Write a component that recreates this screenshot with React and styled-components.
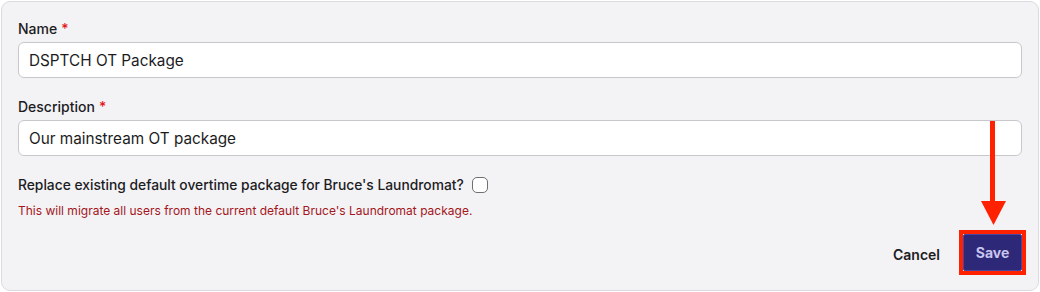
import React from "react";
import styled, { createGlobalStyle } from "styled-components";

const Global = createGlobalStyle`
  html, body { margin: 0; padding: 0; background: #ffffff; }
  body { font-family: Inter, "Liberation Sans", Arial, sans-serif; color: #1c1c1e; }
  * { box-sizing: border-box; }
`;

const Panel = styled.form`
  margin: 1px 1px 0 1px;
  width: 1038px;
  height: 290px;
  background: #f3f2f5;
  border: 1px solid #dcdadf;
  border-radius: 9px;
  padding: 18px 16px 0 16px;
  display: flex;
  flex-direction: column;
`;

const Field = styled.div`
  display: flex;
  flex-direction: column;
  gap: 4px;
  margin-bottom: ${(p) => p.$mb || 0}px;
`;

const Label = styled.label`
  font-size: 14px;
  font-weight: 500;
  line-height: 18px;
  color: #1c1c1e;
`;

const Req = styled.span`
  color: #e41818;
  margin-left: 4px;
`;

const Input = styled.input`
  height: 36px;
  width: 100%;
  border: 1px solid #c9c7cc;
  border-radius: 6px;
  background: #ffffff;
  padding: 0 10px;
  font-family: inherit;
  font-size: 15.3px;
  color: #1c1c1e;
  outline: none;
`;

const CheckRow = styled.div`
  display: flex;
  align-items: center;
  gap: 8px;
  font-size: 13.8px;
  font-weight: 500;
  line-height: 18px;
  height: 18px;
`;

const Check = styled.span`
  width: 16px;
  height: 16px;
  border: 1.5px solid #6e6e73;
  border-radius: 5px;
  background: #fff;
  display: inline-block;
`;

const Warn = styled.p`
  margin: 9px 0 0 0;
  font-size: 12px;
  line-height: 16px;
  color: #a3161b;
`;

const Actions = styled.div`
  display: flex;
  justify-content: flex-end;
  align-items: center;
  gap: 19px;
  margin-top: 11px;
`;

const CancelButton = styled.button`
  background: none;
  border: none;
  font-family: inherit;
  font-size: 14px;
  font-weight: 600;
  color: #1c1c1e;
  padding: 0;
  margin-top: 4px;
`;

const Highlight = styled.div`
  position: relative;
  border: 4px solid #ff2200;
  padding: 0;
  margin-right: -4px;
`;

const SaveButton = styled.button`
  width: 59px;
  height: 37px;
  background: #2d2877;
  border: 1px solid #4a45a0;
  border-radius: 2px;
  font-family: inherit;
  font-size: 14px;
  font-weight: 700;
  color: #c9c5ef;
  display: block;
`;

const Arrow = styled.svg`
  position: absolute;
  left: 18px;
  top: -113px;
  overflow: visible;
`;

export default function App() {
  return (
    <>
      <Global />
      <Panel onSubmit={(e) => e.preventDefault()}>
        <Field $mb={20}>
          <Label>Name<Req>*</Req></Label>
          <Input defaultValue="DSPTCH OT Package" />
        </Field>
        <Field $mb={20}>
          <Label>Description<Req>*</Req></Label>
          <Input defaultValue="Our mainstream OT package" />
        </Field>
        <CheckRow>
          Replace existing default overtime package for Bruce's Laundromat?
          <Check />
        </CheckRow>
        <Warn>This will migrate all users from the current default Bruce's Laundromat package.</Warn>
        <Actions>
          <CancelButton type="button">Cancel</CancelButton>
          <Highlight>
            <Arrow width="25" height="104" viewBox="0 0 25 104">
              <rect x="9" y="0" width="5" height="82" fill="#ff2200" />
              <polygon points="0,80 25,80 12.5,104" fill="#ff2200" />
            </Arrow>
            <SaveButton type="submit">Save</SaveButton>
          </Highlight>
        </Actions>
      </Panel>
    </>
  );
}
